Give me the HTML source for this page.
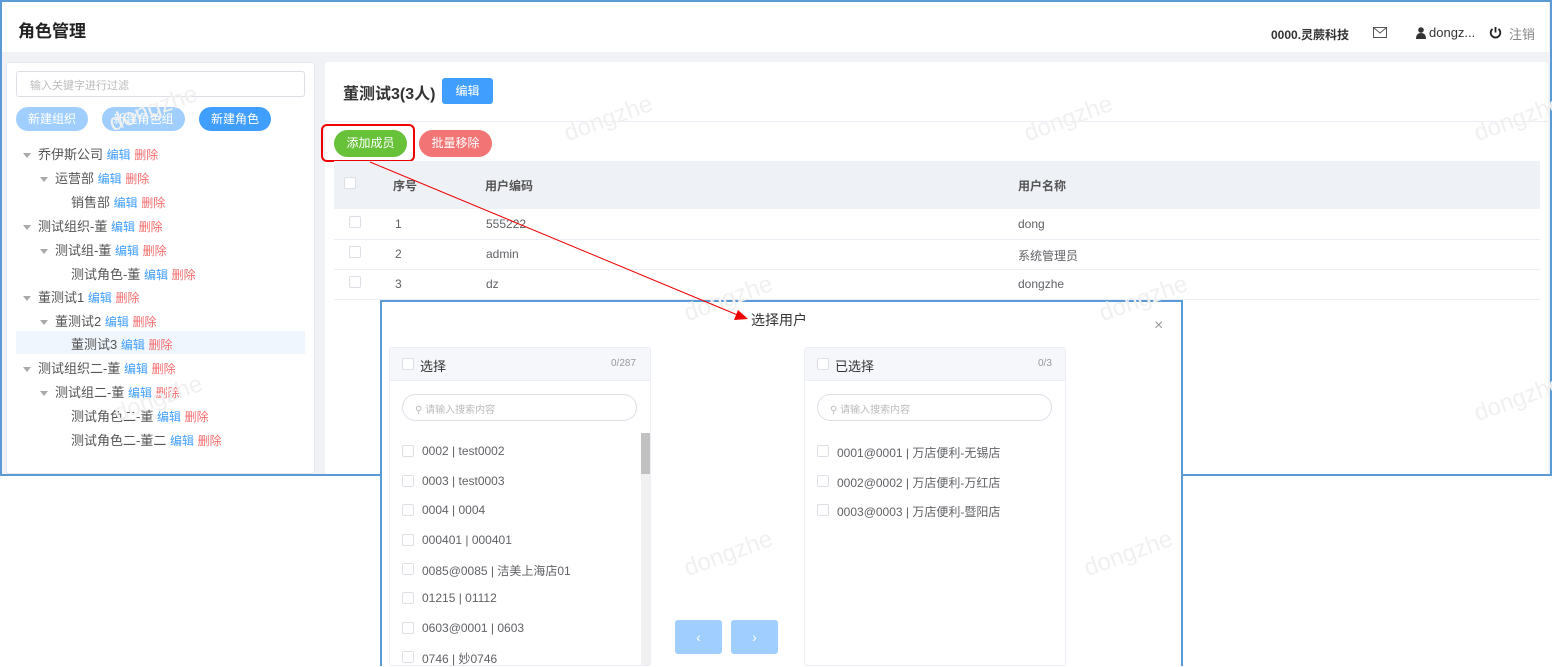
<!DOCTYPE html>
<html><head><meta charset="utf-8">
<style>
*{margin:0;padding:0;box-sizing:border-box}
body{width:1552px;height:666px;position:relative;overflow:hidden;background:#fff;font-family:"Liberation Sans","Noto Sans CJK SC",sans-serif;color:#606266;font-size:12px}
.a{position:absolute;white-space:nowrap}
.cb{position:absolute;width:12px;height:12px;border:1px solid #dcdfe6;border-radius:2px;background:#fff}
.wm{position:absolute;color:#f0f0f0;font-size:24px;transform:rotate(-20deg);transform-origin:left bottom;white-space:nowrap}
.btn{position:absolute;color:#fff;text-align:center;font-size:12px;border-radius:14px}
.e{color:#409eff;font-size:12px}
.d{color:#f56c6c;font-size:12px}
.tr{position:absolute;font-size:13px;color:#555;white-space:nowrap}
.tr .ar{display:inline-block;width:0;height:0;border-left:4px solid transparent;border-right:4px solid transparent;border-top:5px solid #aaa;margin-right:7px;vertical-align:middle}
</style></head><body>
<div class="a" style="left:0;top:0;width:1552px;height:476px;background:#f0f2f5;border:2px solid #5b9bd5"></div>
<div class="a" style="left:2px;top:2px;width:1547px;height:50px;background:#fff"></div>
<div class="a" style="left:18px;top:17px;font-size:17px;font-weight:bold;color:#222">角色管理</div>
<div class="a" style="left:1271px;top:26px;font-size:12px;font-weight:bold;color:#333">0000.灵蕨科技</div>
<svg class="a" style="left:1373px;top:27px" width="14" height="11" viewBox="0 0 14 11"><rect x="0.5" y="0.5" width="13" height="10" fill="none" stroke="#555"/><path d="M1 1 L7 6 L13 1" fill="none" stroke="#555"/></svg>
<svg class="a" style="left:1416px;top:27px" width="10" height="12" viewBox="0 0 10 12"><circle cx="5" cy="3" r="2.8" fill="#333"/><path d="M0 12 Q0 6 5 6 Q10 6 10 12Z" fill="#333"/></svg>
<div class="a" style="left:1429px;top:25px;font-size:13px;color:#333">dongz...</div>
<svg class="a" style="left:1489px;top:26px" width="13" height="13" viewBox="0 0 13 13"><path d="M3.5 3 A4.8 4.8 0 1 0 9.5 3" fill="none" stroke="#222" stroke-width="1.8"/><path d="M6.5 1 V6.5" stroke="#222" stroke-width="1.8"/></svg>
<div class="a" style="left:1509px;top:24px;font-size:13px;color:#888">注销</div>

<div class="a" style="left:6px;top:62px;width:309px;height:412px;background:#fff;border:1px solid #e4e7ed;border-radius:3px"></div>
<div class="a" style="left:16px;top:71px;width:289px;height:26px;border:1px solid #dcdfe6;border-radius:3px"></div>
<div class="a" style="left:30px;top:77px;font-size:11px;color:#bbb">输入关键字进行过滤</div>
<div class="btn" style="left:16px;top:107px;width:72px;height:24px;line-height:24px;background:#a0cfff;border-radius:12px">新建组织</div>
<div class="btn" style="left:102px;top:107px;width:83px;height:24px;line-height:24px;background:#a0cfff;border-radius:12px">新建角色组</div>
<div class="btn" style="left:199px;top:107px;width:72px;height:24px;line-height:24px;background:#409eff;border-radius:12px">新建角色</div>
<div class="a" style="left:16px;top:331px;width:289px;height:23px;background:#f0f6fd"></div>
<div class="tr" style="left:23px;top:144px"><span class="ar"></span>乔伊斯公司 <span class="e">编辑</span> <span class="d">删除</span></div>
<div class="tr" style="left:40px;top:168px"><span class="ar"></span>运营部 <span class="e">编辑</span> <span class="d">删除</span></div>
<div class="tr" style="left:71px;top:192px">销售部 <span class="e">编辑</span> <span class="d">删除</span></div>
<div class="tr" style="left:23px;top:216px"><span class="ar"></span>测试组织-董 <span class="e">编辑</span> <span class="d">删除</span></div>
<div class="tr" style="left:40px;top:240px"><span class="ar"></span>测试组-董 <span class="e">编辑</span> <span class="d">删除</span></div>
<div class="tr" style="left:71px;top:264px">测试角色-董 <span class="e">编辑</span> <span class="d">删除</span></div>
<div class="tr" style="left:23px;top:287px"><span class="ar"></span>董测试1 <span class="e">编辑</span> <span class="d">删除</span></div>
<div class="tr" style="left:40px;top:311px"><span class="ar"></span>董测试2 <span class="e">编辑</span> <span class="d">删除</span></div>
<div class="tr" style="left:71px;top:334px">董测试3 <span class="e">编辑</span> <span class="d">删除</span></div>
<div class="tr" style="left:23px;top:358px"><span class="ar"></span>测试组织二-董 <span class="e">编辑</span> <span class="d">删除</span></div>
<div class="tr" style="left:40px;top:382px"><span class="ar"></span>测试组二-董 <span class="e">编辑</span> <span class="d">删除</span></div>
<div class="tr" style="left:71px;top:406px">测试角色二-董 <span class="e">编辑</span> <span class="d">删除</span></div>
<div class="tr" style="left:71px;top:430px">测试角色二-董二 <span class="e">编辑</span> <span class="d">删除</span></div>

<div class="a" style="left:325px;top:62px;width:1223px;height:412px;background:#fff;border-radius:3px"></div>
<div class="a" style="left:343px;top:80px;font-size:16px;font-weight:bold;color:#333">董测试3(3人)</div>
<div class="a" style="left:442px;top:78px;width:51px;height:26px;line-height:26px;text-align:center;color:#fff;background:#409eff;border-radius:3px">编辑</div>
<div class="a" style="left:325px;top:121px;width:1223px;height:1px;background:#ebeef5"></div>
<div class="btn" style="left:334px;top:130px;width:73px;height:27px;line-height:27px;background:#67c23a">添加成员</div>
<div class="btn" style="left:419px;top:130px;width:73px;height:27px;line-height:27px;background:#f27474">批量移除</div>
<div class="a" style="left:321px;top:124px;width:94px;height:38px;border:2px solid #e00;border-radius:6px"></div>
<div class="a" style="left:334px;top:161px;width:1206px;height:48px;background:#eef1f6"></div>
<div class="cb" style="left:344px;top:177px"></div>
<div class="a" style="left:393px;top:177px;font-weight:bold;color:#555">序号</div>
<div class="a" style="left:485px;top:177px;font-weight:bold;color:#555">用户编码</div>
<div class="a" style="left:1018px;top:177px;font-weight:bold;color:#555">用户名称</div>
<div class="cb" style="left:349px;top:216px"></div><div class="a" style="left:395px;top:217px">1</div><div class="a" style="left:486px;top:217px">555222</div><div class="a" style="left:1018px;top:217px">dong</div>
<div class="a" style="left:334px;top:239px;width:1206px;height:1px;background:#ebeef5"></div>
<div class="cb" style="left:349px;top:246px"></div><div class="a" style="left:395px;top:247px">2</div><div class="a" style="left:486px;top:247px">admin</div><div class="a" style="left:1018px;top:247px">系统管理员</div>
<div class="a" style="left:334px;top:269px;width:1206px;height:1px;background:#ebeef5"></div>
<div class="cb" style="left:349px;top:276px"></div><div class="a" style="left:395px;top:277px">3</div><div class="a" style="left:486px;top:277px">dz</div><div class="a" style="left:1018px;top:277px">dongzhe</div>
<div class="a" style="left:334px;top:299px;width:1206px;height:1px;background:#ebeef5"></div>

<div class="a" style="left:380px;top:300px;width:803px;height:366px;background:#fff;border:2px solid #5b9bd5;border-bottom:none"></div>
<div class="a" style="left:751px;top:310px;font-size:14px;color:#333">选择用户</div>
<div class="a" style="left:1154px;top:317px;font-size:16px;color:#999">×</div>
<div class="a" style="left:389px;top:347px;width:262px;height:319px;border:1px solid #ebeef5;border-radius:3px"></div>
<div class="a" style="left:390px;top:348px;width:260px;height:33px;background:#f5f7fa;border-bottom:1px solid #ebeef5"></div>
<div class="cb" style="left:402px;top:358px"></div>
<div class="a" style="left:420px;top:356px;font-size:13px;color:#333">选择</div>
<div class="a" style="left:611px;top:358px;font-size:10px;color:#999">0/287</div>
<div class="a" style="left:402px;top:394px;width:235px;height:27px;border:1px solid #dcdfe6;border-radius:14px"></div>
<div class="a" style="left:415px;top:401px;font-size:10px;color:#bbb">⚲ 请输入搜索内容</div>
<div class="a" style="left:641px;top:433px;width:9px;height:232px;background:#f1f1f1"></div>
<div class="a" style="left:641px;top:433px;width:9px;height:41px;background:#c1c1c1"></div>
<div class="cb" style="left:402px;top:445px"></div><div class="a" style="left:422px;top:444px">0002 | test0002</div>
<div class="cb" style="left:402px;top:475px"></div><div class="a" style="left:422px;top:474px">0003 | test0003</div>
<div class="cb" style="left:402px;top:504px"></div><div class="a" style="left:422px;top:503px">0004 | 0004</div>
<div class="cb" style="left:402px;top:534px"></div><div class="a" style="left:422px;top:533px">000401 | 000401</div>
<div class="cb" style="left:402px;top:563px"></div><div class="a" style="left:422px;top:562px">0085@0085 | 洁美上海店01</div>
<div class="cb" style="left:402px;top:592px"></div><div class="a" style="left:422px;top:591px">01215 | 01112</div>
<div class="cb" style="left:402px;top:622px"></div><div class="a" style="left:422px;top:621px">0603@0001 | 0603</div>
<div class="cb" style="left:402px;top:651px"></div><div class="a" style="left:422px;top:650px">0746 | 妙0746</div>
<div class="a" style="left:675px;top:620px;width:47px;height:34px;background:#a0cfff;border-radius:3px;color:#fff;text-align:center;line-height:34px;font-size:14px">‹</div>
<div class="a" style="left:731px;top:620px;width:47px;height:34px;background:#a0cfff;border-radius:3px;color:#fff;text-align:center;line-height:34px;font-size:14px">›</div>
<div class="a" style="left:804px;top:347px;width:262px;height:319px;border:1px solid #ebeef5;border-radius:3px"></div>
<div class="a" style="left:805px;top:348px;width:260px;height:33px;background:#f5f7fa;border-bottom:1px solid #ebeef5"></div>
<div class="cb" style="left:817px;top:358px"></div>
<div class="a" style="left:835px;top:356px;font-size:13px;color:#333">已选择</div>
<div class="a" style="left:1038px;top:358px;font-size:10px;color:#999">0/3</div>
<div class="a" style="left:817px;top:394px;width:235px;height:27px;border:1px solid #dcdfe6;border-radius:14px"></div>
<div class="a" style="left:830px;top:401px;font-size:10px;color:#bbb">⚲ 请输入搜索内容</div>
<div class="cb" style="left:817px;top:445px"></div><div class="a" style="left:837px;top:444px">0001@0001 | 万店便利-无锡店</div>
<div class="cb" style="left:817px;top:475px"></div><div class="a" style="left:837px;top:474px">0002@0002 | 万店便利-万红店</div>
<div class="cb" style="left:817px;top:504px"></div><div class="a" style="left:837px;top:503px">0003@0003 | 万店便利-暨阳店</div>

<div class="wm" style="left:115px;top:110px">dongzhe</div>
<div class="wm" style="left:570px;top:120px">dongzhe</div>
<div class="wm" style="left:1030px;top:120px">dongzhe</div>
<div class="wm" style="left:1480px;top:120px">dongzhe</div>
<div class="wm" style="left:690px;top:300px">dongzhe</div>
<div class="wm" style="left:1105px;top:300px">dongzhe</div>
<div class="wm" style="left:120px;top:400px">dongzhe</div>
<div class="wm" style="left:1480px;top:400px">dongzhe</div>
<div class="wm" style="left:690px;top:555px">dongzhe</div>
<div class="wm" style="left:1090px;top:555px">dongzhe</div>

<svg class="a" style="left:0;top:0" width="1552" height="666"><line x1="370" y1="162" x2="740" y2="316" stroke="#e00" stroke-width="1"/><polygon points="748,319 734,320 738,310" fill="#e00"/></svg>
</body></html>
